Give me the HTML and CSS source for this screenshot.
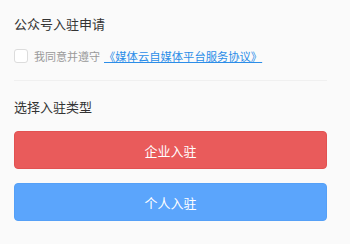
FILE: index.html
```html
<!DOCTYPE html>
<html lang="zh-CN">
<head>
<meta charset="utf-8">
<title>公众号入驻申请</title>
<link rel="stylesheet" href="styles.css">
</head>
<body>
<div class="page">
  <div class="title">公众号入驻申请</div>
  <label class="agree">
    <span class="checkbox"></span>
    <span class="agree-text">我同意并遵守</span>
    <a class="agree-link" href="#">《媒体云自媒体平台服务协议》</a>
  </label>
  <div class="divider"></div>
  <div class="title title-second">选择入驻类型</div>
  <div class="buttons">
    <button class="btn btn-red">企业入驻</button>
    <button class="btn btn-blue">个人入驻</button>
  </div>
</div>
</body>
</html>
```

FILE: styles.css
```css
html, body {
  margin: 0;
  padding: 0;
  background: #fafafa;
}
body {
  font-family: "Noto Sans CJK SC", "Noto Sans", sans-serif;
  color: #333;
}
.page {
  width: 313px;
  padding: 14px 0 0 14px;
}
.title {
  font-size: 13px;
  line-height: 20px;
  height: 20px;
  color: #333;
}
.agree {
  display: flex;
  align-items: center;
  height: 20px;
  margin-top: 12px;
}
.checkbox {
  box-sizing: border-box;
  width: 14px;
  height: 14px;
  border: 1px solid #dcdcdc;
  border-radius: 3px;
  background: #fff;
  margin-right: 6px;
}
.agree-text {
  font-size: 11px;
  color: #999;
  line-height: 20px;
  margin-right: 4px;
}
.agree-link {
  font-size: 11.3px;
  color: #2b8de8;
  line-height: 20px;
  text-decoration: underline;
}
.divider {
  height: 1px;
  background: #f0f0f0;
  margin-top: 14px;
}
.title-second {
  margin-top: 16px;
}
.buttons {
  display: flex;
  flex-direction: column;
  gap: 14px;
  margin-top: 14px;
}
.btn {
  display: block;
  width: 100%;
  height: 38px;
  border-radius: 4px;
  font-family: "Noto Sans CJK SC", "Noto Sans", sans-serif;
  font-size: 13px;
  color: #fff;
  padding: 0;
}
.btn-red {
  background: #e95b5b;
  border: 1px solid #e25252;
}
.btn-blue {
  background: #5ba5fc;
  border: 1px solid #55a0f7;
}
```
